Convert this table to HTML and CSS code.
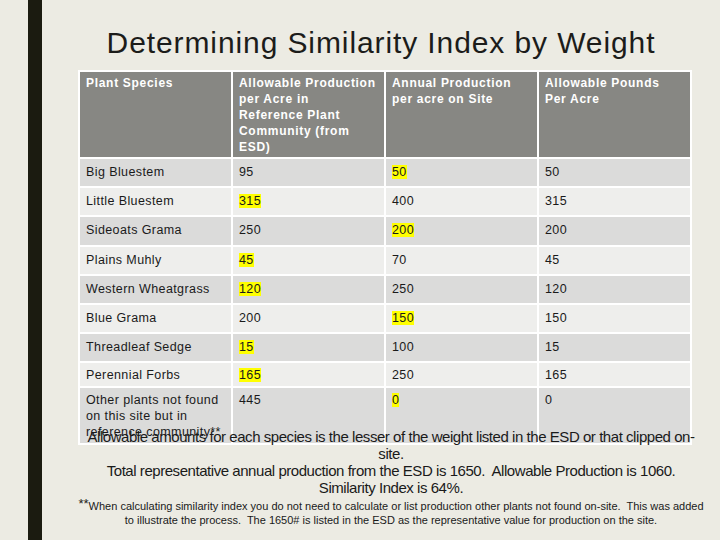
FILE: index.html
```html
<!DOCTYPE html>
<html>
<head>
<meta charset="utf-8">
<link rel="stylesheet" href="styles.css">
</head>
<body>
<div class="page">
  <div class="bar"></div>
  <div class="main">
    <h1 class="title">Determining Similarity Index by Weight</h1>
    <table class="grid">
      <tr class="head">
        <th>Plant Species</th>
        <th>Allowable Production<br>per Acre in<br>Reference Plant<br>Community (from<br>ESD)</th>
        <th>Annual Production<br>per acre on Site</th>
        <th>Allowable Pounds<br>Per Acre</th>
      </tr>
      <tr class="odd"><td>Big Bluestem</td><td>95</td><td><span class="hl">50</span></td><td>50</td></tr>
      <tr class="even"><td>Little Bluestem</td><td><span class="hl">315</span></td><td>400</td><td>315</td></tr>
      <tr class="odd"><td>Sideoats Grama</td><td>250</td><td><span class="hl">200</span></td><td>200</td></tr>
      <tr class="even"><td>Plains Muhly</td><td><span class="hl">45</span></td><td>70</td><td>45</td></tr>
      <tr class="odd"><td>Western Wheatgrass</td><td><span class="hl">120</span></td><td>250</td><td>120</td></tr>
      <tr class="even"><td>Blue Grama</td><td>200</td><td><span class="hl">150</span></td><td>150</td></tr>
      <tr class="odd"><td>Threadleaf Sedge</td><td><span class="hl">15</span></td><td>100</td><td>15</td></tr>
      <tr class="even short"><td>Perennial Forbs</td><td><span class="hl">165</span></td><td>250</td><td>165</td></tr>
      <tr class="odd tall"><td>Other plants not found<br>on this site but in<br>reference community**</td><td>445</td><td><span class="hl">0</span></td><td>0</td></tr>
    </table>
    <div class="caption">
      <p>Allowable amounts for each species is the lesser of the weight listed in the ESD or that clipped on-<br>site.</p>
      <p>Total representative annual production from the ESD is 1650.&nbsp; Allowable Production is 1060.</p>
      <p>Similarity Index is 64%.</p>
    </div>
    <div class="foot">
      <p><span class="stars">**</span>When calculating similarity index you do not need to calculate or list production other plants not found on-site.&nbsp; This was added<br>to illustrate the process.&nbsp; The 1650# is listed in the ESD as the representative value for production on the site.</p>
    </div>
  </div>
</div>
</body>
</html>
```

FILE: styles.css
```css
html, body {
  margin: 0;
  padding: 0;
}
body {
  background: #ecebe3;
  width: 720px;
  height: 540px;
  overflow: hidden;
  font-family: "Liberation Sans", Arial, sans-serif;
}
.page {
  display: flex;
  height: 540px;
}
.bar {
  width: 14px;
  margin-left: 28px;
  background: #1b1b10;
  flex: none;
}
.main {
  flex: 1;
  display: flex;
  flex-direction: column;
}
.title {
  margin: 26px 0 10px 0;
  font-weight: normal;
  font-size: 30px;
  letter-spacing: 0.9px;
  line-height: 34px;
  text-align: center;
  color: #1c1c1a;
}
.grid {
  margin-left: 36px;
  width: 614px;
  background: #ffffff;
  border-collapse: separate;
  border-spacing: 2px;
  table-layout: fixed;
  position: relative;
}
.grid th, .grid td {
  text-align: left;
  vertical-align: top;
  padding: 0 0 0 6px;
  letter-spacing: 0.4px;
  line-height: 16px;
}
.grid th {
  background: #878783;
  color: #ffffff;
  font-size: 12px;
  font-weight: bold;
  letter-spacing: 0.7px;
  height: 85px;
  padding-top: 3px;
  box-sizing: border-box;
}
.grid td {
  font-size: 12.5px;
  color: #1a1a1a;
  height: 27.2px;
  padding-top: 5px;
  box-sizing: border-box;
}
.grid tr.short td {
  height: 23px;
  padding-top: 4px;
}
.grid tr.tall td {
  height: 55px;
  padding-top: 4px;
}
.odd td {
  background: #dbdbda;
}
.even td {
  background: #eeeeec;
}
.hl {
  background: #ffff00;
}
.caption {
  position: relative;
  margin: -17px 8px 0 28px;
  text-align: center;
  font-size: 15px;
  letter-spacing: -0.45px;
  line-height: 17px;
  color: #1a1a1a;
}
.caption p, .foot p {
  margin: 0;
}
.foot {
  margin: 1px 8px 0 28px;
  text-align: center;
  font-size: 11px;
  letter-spacing: 0;
  line-height: 14px;
  color: #1a1a1a;
}
.stars {
  font-size: 13px;
  vertical-align: 2px;
}
```
